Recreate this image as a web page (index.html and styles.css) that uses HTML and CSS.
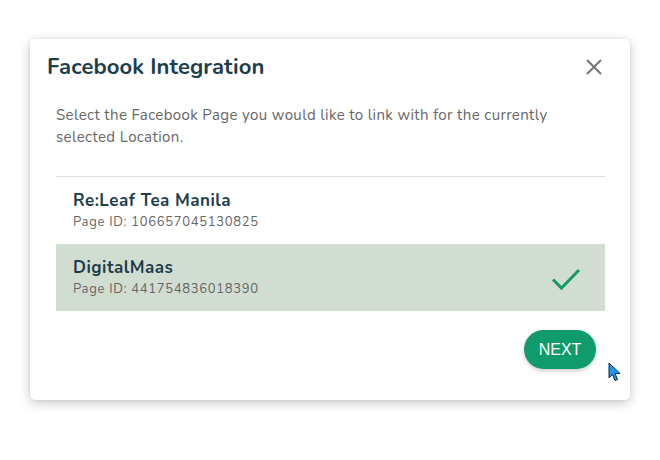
FILE: index.html
```html
<!DOCTYPE html>
<html>
<head>
<meta charset="utf-8">
<link rel="stylesheet" href="styles.css">
</head>
<body>
<div class="dialog">
  <div class="header">
    <h1 class="title">Facebook Integration</h1>
    <button class="close" aria-label="Close">
      <svg width="16" height="16" viewBox="0 0 16 16"><path d="M1.5 1.5 L14.5 14.5 M14.5 1.5 L1.5 14.5" stroke="#757575" stroke-width="2" stroke-linecap="round" fill="none"/></svg>
    </button>
  </div>
  <div class="body">
    <p class="desc">Select the Facebook Page you would like to link with for the currently selected Location.</p>
    <div class="list">
      <div class="item">
        <div class="info">
          <div class="name">Re:Leaf Tea Manila</div>
          <div class="pid">Page ID: 106657045130825</div>
        </div>
      </div>
      <div class="item selected">
        <div class="info">
          <div class="name">DigitalMaas</div>
          <div class="pid">Page ID: 441754836018390</div>
        </div>
        <svg class="check" width="30" height="24" viewBox="0 0 30 24"><path d="M2 12.5 L10.5 21 L28 3" stroke="#14996b" stroke-width="3" fill="none"/></svg>
      </div>
    </div>
    <div class="actions">
      <button class="next">NEXT</button>
    </div>
  </div>
  <svg class="cursor" width="14" height="20" viewBox="0 0 14 20"><path d="M1 1 L1 16 L4.5 12.5 L7 18.5 L9.5 17.5 L7 11.5 L12 11.5 Z" fill="#1e96f0" stroke="#0a2a55" stroke-width="1"/></svg>
</div>
</body>
</html>
```
FILE: styles.css
```css
* { box-sizing: border-box; }
body {
  margin: 0;
  background: #ffffff;
  font-family: "Nunito", "Lato", "Open Sans", sans-serif;
  width: 660px;
  height: 460px;
  overflow: hidden;
}
.dialog {
  position: relative;
  margin: 39px 0 0 30px;
  width: 600px;
  height: 361px;
  background: #fff;
  border-radius: 5px;
  box-shadow: 0 3px 12px rgba(0,0,0,0.22), 0 0 3px rgba(0,0,0,0.08);
}
.header {
  display: flex;
  align-items: center;
  justify-content: space-between;
  padding: 8px 28px 0 17px;
  height: 48px;
}
.title {
  margin: 0;
  font-size: 22px;
  font-weight: 700;
  color: #1c3d4c;
  letter-spacing: 0.1px;
}
.close {
  border: 0;
  background: none;
  padding: 0;
  width: 16px;
  height: 16px;
  display: flex;
}
.body {
  padding: 0 25px 0 26px;
}
.desc {
  margin: 17px 0 0 0;
  font-size: 15px;
  line-height: 22px;
  color: #666;
  letter-spacing: 0.38px;
  padding-right: 20px;
}
.list {
  margin-top: 28px;
  border-top: 1px solid #dcdcdc;
}
.item {
  display: flex;
  align-items: center;
  justify-content: space-between;
  height: 67px;
  padding: 0 24px 0 17px;
}
.selected { background: #d2ddd2; }
.name {
  font-size: 17px;
  font-weight: 700;
  color: #1c3d4c;
  line-height: 22px;
  letter-spacing: 0.5px;
}
.pid {
  font-size: 13px;
  color: #666;
  letter-spacing: 0.7px;
  line-height: 20px;
}
.check { margin-top: 2px; }
.actions {
  display: flex;
  justify-content: flex-end;
  padding-top: 19px;
  padding-right: 9px;
}
.next {
  border: 0;
  background: #109b6d;
  color: #fff;
  font-family: "Liberation Sans", Arial, sans-serif;
  font-size: 16px;
  width: 72px;
  height: 39px;
  border-radius: 20px;
  box-shadow: 0 2px 4px rgba(0,0,0,0.2);
}
.cursor {
  position: absolute;
  left: 578px;
  top: 323px;
}
```
